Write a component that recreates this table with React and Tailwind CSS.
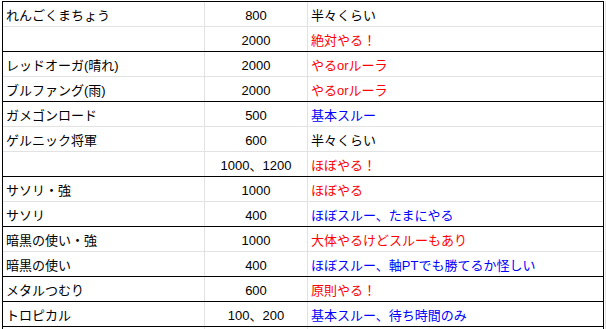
import React from "react";

const rows = [
  { name: "れんごくまちょう", exp: "800", note: "半々くらい", color: "text-black", line: "gray" },
  { name: "", exp: "2000", note: "絶対やる！", color: "text-[#ff0000]", line: "black" },
  { name: "レッドオーガ(晴れ)", exp: "2000", note: "やるorルーラ", color: "text-[#ff0000]", line: "gray" },
  { name: "ブルファング(雨)", exp: "2000", note: "やるorルーラ", color: "text-[#ff0000]", line: "black" },
  { name: "ガメゴンロード", exp: "500", note: "基本スルー", color: "text-[#0000ff]", line: "gray" },
  { name: "ゲルニック将軍", exp: "600", note: "半々くらい", color: "text-black", line: "gray" },
  { name: "", exp: "1000、1200", note: "ほぼやる！", color: "text-[#ff0000]", line: "black" },
  { name: "サソリ・強", exp: "1000", note: "ほぼやる", color: "text-[#ff0000]", line: "gray" },
  { name: "サソリ", exp: "400", note: "ほぼスルー、たまにやる", color: "text-[#0000ff]", line: "black" },
  { name: "暗黒の使い・強", exp: "1000", note: "大体やるけどスルーもあり", color: "text-[#ff0000]", line: "gray" },
  { name: "暗黒の使い", exp: "400", note: "ほぼスルー、軸PTでも勝てるか怪しい", color: "text-[#0000ff]", line: "black" },
  { name: "メタルつむり", exp: "600", note: "原則やる！", color: "text-[#ff0000]", line: "black" },
  { name: "トロピカル", exp: "100、200", note: "基本スルー、待ち時間のみ", color: "text-[#0000ff]", line: "black" },
];

const Row = ({ row }) => {
  const lineClass = row.line === "black" ? "border-black" : "border-[#e2e2e2]";
  return (
    <div className={`flex h-[25px] border-b ${lineClass}`}>
      {/* Name */}
      <div className="w-[202px] shrink-0 border-r border-[#e2e2e2] pl-[3px] pt-[6px] leading-[16px] text-black whitespace-nowrap overflow-hidden">
        {row.name}
      </div>
      {/* Exp */}
      <div className="w-[103px] shrink-0 border-r border-[#e2e2e2] pt-[6px] leading-[16px] text-center text-black whitespace-nowrap overflow-hidden">
        {row.exp}
      </div>
      {/* Note */}
      <div className={`flex-1 pl-[3px] pt-[6px] leading-[16px] whitespace-nowrap overflow-hidden ${row.color}`}>
        {row.note}
      </div>
    </div>
  );
};

const App = () => {
  return (
    <div
      className="w-[606px] h-[329px] bg-white overflow-hidden text-[13px]"
      style={{ fontFamily: '"Liberation Sans", "Noto Sans CJK JP", sans-serif' }}
    >
      <div className="flex pt-[1px]">
        <div className="w-[2px] shrink-0" />
        <div className="w-[602px] shrink-0 border-t border-l border-r border-black">
          {rows.map((row, i) => (
            <Row key={i} row={row} />
          ))}
          {/* gridlines below the table */}
          <div className="flex h-[3px]">
            <div className="w-[202px] shrink-0 border-r border-[#e2e2e2]" />
            <div className="w-[103px] shrink-0 border-r border-[#e2e2e2]" />
          </div>
        </div>
        <div className="w-[2px] shrink-0 border-r border-[#e2e2e2]" />
      </div>
    </div>
  );
};

export default App;
